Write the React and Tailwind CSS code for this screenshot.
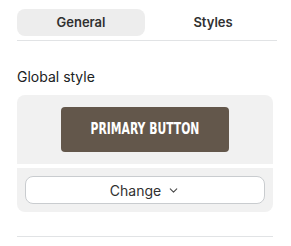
import { ChevronDown } from 'lucide-react';

export default function App() {
  return (
    <div className="w-[291px] h-[246px] bg-white font-['Inter',sans-serif] text-[#202223]">
      <div className="pl-[17px] pr-[14px] pt-[9px]">
        <div className="grid grid-cols-2 gap-1 pb-1 border-b border-[#e1e3e5]">
          <button className="h-[27px] rounded-lg bg-[#ededed] text-[13px] font-semibold text-[#303030]">General</button>
          <button className="h-[27px] rounded-lg text-[13px] font-semibold text-[#303030]">Styles</button>
        </div>
      </div>
      <div className="pl-[17px] pr-[18px]">
        <div className="mt-[28px] text-[14px] leading-4 text-[#202223]">Global style</div>
        <div className="mt-[10px] rounded-lg bg-[#f1f1f1] overflow-hidden">
          <div className="flex justify-center pt-3 pb-3">
            <div className="w-[168px] h-[45px] rounded bg-[#63574b] flex items-center justify-center">
              <span className="text-white font-bold text-[15px] scale-x-80 font-['DejaVu_Sans_Condensed','DejaVu_Sans',sans-serif]">PRIMARY BUTTON</span>
            </div>
          </div>
          <div className="h-1 bg-white"></div>
          <div className="px-2 pt-2 pb-2">
            <button className="w-full h-7 rounded-lg bg-white border border-[#c9cccf] flex items-center justify-center gap-1.5 text-[14px] text-[#303030]">
              Change <ChevronDown size={13} strokeWidth={2} className="text-[#4a4a4a] mt-px" />
            </button>
          </div>
        </div>
        <div className="mt-6 border-t border-[#e1e3e5]"></div>
      </div>
    </div>
  );
}
